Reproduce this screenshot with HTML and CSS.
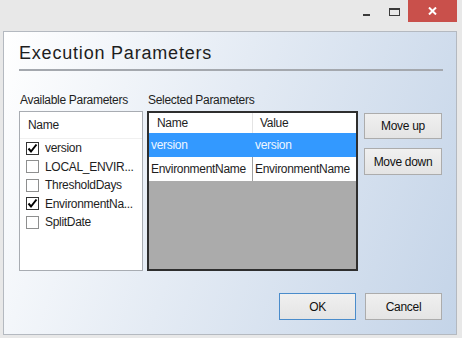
FILE: index.html
```html
<!DOCTYPE html>
<html lang="en">
<head>
    <meta charset="UTF-8">
    <title>Execution Parameters</title>
    <link rel="stylesheet" href="styles.css">
</head>
<body>
    <div class="titlebar">
        <div class="caption-btn minimize"><span></span></div>
        <div class="caption-btn maximize"><span></span></div>
        <div class="caption-btn close">
            <svg width="9" height="8" viewBox="0 0 9 8">
                <path d="M1 0.5 L8 7.5 M8 0.5 L1 7.5" stroke="#ffffff" stroke-width="2" fill="none"/>
            </svg>
        </div>
    </div>

    <div class="dialog">
        <h1>Execution Parameters</h1>
        <div class="rule"></div>

        <div class="panels">
            <div class="panel">
                <div class="panel-label">Available Parameters</div>
                <div class="listbox">
                    <div class="listbox-header">Name</div>
                    <div class="list-item"><span class="checkbox checked"><svg width="11" height="11" viewBox="0 0 11 11"><path d="M1.5 5.5 L4 8.5 L9.5 1.5" stroke="#000" stroke-width="2" fill="none"/></svg></span>version</div>
                    <div class="list-item"><span class="checkbox"></span>LOCAL_ENVIR...</div>
                    <div class="list-item"><span class="checkbox"></span>ThresholdDays</div>
                    <div class="list-item"><span class="checkbox checked"><svg width="11" height="11" viewBox="0 0 11 11"><path d="M1.5 5.5 L4 8.5 L9.5 1.5" stroke="#000" stroke-width="2" fill="none"/></svg></span>EnvironmentNa...</div>
                    <div class="list-item"><span class="checkbox"></span>SplitDate</div>
                </div>
            </div>

            <div class="panel">
                <div class="panel-label">Selected Parameters</div>
                <div class="grid">
                    <div class="grid-row grid-head">
                        <div class="cell">Name</div>
                        <div class="cell">Value</div>
                    </div>
                    <div class="grid-row selected">
                        <div class="cell">version</div>
                        <div class="cell">version</div>
                    </div>
                    <div class="grid-row">
                        <div class="cell">EnvironmentName</div>
                        <div class="cell">EnvironmentName</div>
                    </div>
                </div>
            </div>

            <div class="side-buttons">
                <button class="btn move-up">Move up</button>
                <button class="btn move-down">Move down</button>
            </div>
        </div>

        <div class="footer">
            <button class="btn default">OK</button>
            <button class="btn">Cancel</button>
        </div>
    </div>
</body>
</html>
```

FILE: styles.css
```css
body {
    background-color: #e8e8e8;
    color: #1e1e1e;
    font-family: 'Liberation Sans', Arial, sans-serif;
    font-size: 12px;
    height: 338px;
    letter-spacing: -0.3px;
    margin: 0;
    overflow: hidden;
    width: 462px;
}

.titlebar {
    display: flex;
    height: 31px;
    justify-content: flex-end;
    padding-right: 5px;
}
.caption-btn {
    align-items: center;
    display: flex;
    height: 22px;
    justify-content: center;
    width: 28px;
}
.minimize span {
    background-color: #3a3a3a;
    height: 2px;
    margin-top: 7px;
    width: 7px;
}
.maximize span {
    border: 1px solid #3a3a3a;
    border-top-width: 2px;
    box-sizing: border-box;
    height: 8px;
    margin-top: 1px;
    width: 11px;
}
.close {
    background-color: #c9504b;
    width: 49px;
}

.dialog {
    background: linear-gradient(110deg, #ffffff 0%, #e4ebf4 45%, #c4d4e8 100%);
    border: 1px solid #b4b9c0;
    box-sizing: border-box;
    height: 304px;
    margin-left: 3px;
    padding: 0 14px 0 15px;
    width: 454px;
}

h1 {
    font-size: 18px;
    font-weight: normal;
    letter-spacing: 0.8px;
    line-height: 24px;
    margin: 0;
    padding-top: 9px;
}
.rule {
    background-color: #a4a8ae;
    height: 2px;
    margin-top: 4px;
    width: 424px;
}

.panels {
    display: flex;
    margin-top: 22px;
}
.panel-label {
    height: 15px;
    line-height: 15px;
    margin-bottom: 3px;
    padding-left: 1px;
}

.listbox {
    background-color: #ffffff;
    border: 1px solid #a8acb2;
    box-sizing: border-box;
    height: 160px;
    margin-right: 4px;
    width: 124px;
}
.listbox-header {
    border-bottom: 1px solid #f0f0f0;
    height: 26px;
    line-height: 27px;
    padding-left: 8px;
}
.list-item {
    align-items: center;
    display: flex;
    height: 18.5px;
    padding-left: 6px;
    white-space: nowrap;
}
.checkbox {
    align-items: center;
    background-color: #ffffff;
    border: 1px solid #8e8f8f;
    box-sizing: border-box;
    display: inline-flex;
    height: 13px;
    justify-content: center;
    margin-right: 6px;
    width: 13px;
}
.checkbox.checked {
    border-color: #333333;
}

.grid {
    background-color: #ababab;
    border: 2px solid #2e2e2e;
    box-sizing: border-box;
    height: 160px;
    width: 211px;
}
.grid-row {
    background-color: #ffffff;
    display: flex;
    height: 24px;
    line-height: 24px;
    white-space: nowrap;
}
.grid-row .cell {
    border-right: 1px solid #a0a0a0;
    overflow: hidden;
    padding-left: 2px;
    width: 101px;
}
.grid-row .cell:last-child {
    border-right: none;
    flex: 1;
}
.grid-head {
    height: 20px;
    line-height: 20px;
}
.grid-head .cell {
    border-right-color: #e4e4e4;
    padding-left: 8px;
    width: 95px;
}
.grid-head .cell:last-child {
    padding-left: 7px;
}
.grid-row.selected {
    background-color: #3399ff;
    color: #eef6ff;
}
.grid-row.selected .cell {
    border-right-color: #3399ff;
}

.side-buttons {
    display: flex;
    flex-direction: column;
    gap: 9px;
    margin-left: 6px;
    padding-top: 20px;
}

.btn {
    background: linear-gradient(#f0f0f0, #e4e4e4);
    border: 1px solid #acacac;
    color: #111111;
    font-family: 'Liberation Sans', Arial, sans-serif;
    font-size: 12px;
    height: 27px;
    letter-spacing: -0.3px;
    padding: 0;
    width: 78px;
}
.move-up {
    height: 26px;
}
.btn.default {
    border-color: #4a8ccb;
}

.footer {
    display: flex;
    gap: 9px;
    justify-content: flex-end;
    margin-top: 22px;
}
.footer .btn {
    width: 77px;
}
```
